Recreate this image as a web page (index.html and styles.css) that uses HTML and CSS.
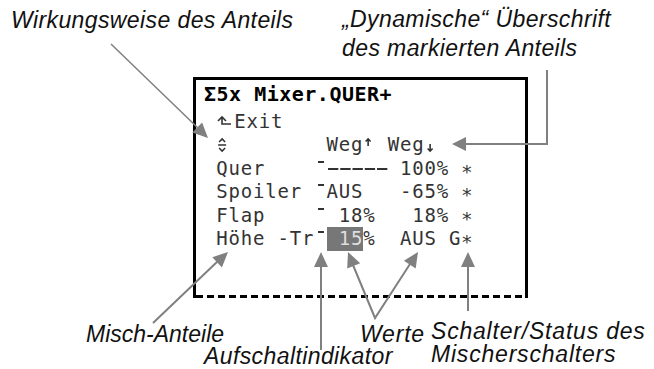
FILE: index.html
```html
<!DOCTYPE html>
<html lang="de">
<head>
    <meta charset="UTF-8">
    <title>Mixer QUER+</title>
    <link rel="stylesheet" href="styles.css">
</head>
<body>
    <div class="canvas">
        <p class="note note-mode">Wirkungsweise des Anteils</p>
        <p class="note note-head">„Dynamische“ Überschrift<br>des markierten Anteils</p>

        <div class="lcd">
            <div class="lcd-title">Σ5x Mixer.QUER+</div>
            <div class="row"> <svg class="ico ico-exit" viewBox="0 0 18 14"><path d="M2 7 L6 3 L10 7 M6 3 V10 H15" /></svg>Exit</div>
            <div class="row"> <svg class="ico ico-sel" viewBox="0 0 12 16"><path d="M3 5 L6 2 L9 5 M2 8 H10 M3 11 L6 14 L9 11" /></svg>        Weg<svg class="ico ico-dir" viewBox="0 0 12 16"><path d="M5 2 V9 M2.5 4.5 L5 2 L7.5 4.5" /></svg> Weg<svg class="ico ico-dir" viewBox="0 0 12 16"><path d="M5 7 V14 M2.5 11.5 L5 14 L7.5 11.5" /></svg></div>
            <div class="row"> Quer    <i class="ind"></i><span class="dashes"></span> 100% ∗</div>
            <div class="row"> Spoiler <i class="ind"></i>AUS   -65% ∗</div>
            <div class="row"> Flap    <i class="ind"></i> 18%   18% ∗</div>
            <div class="row"> Höhe -Tr<i class="ind"></i><span class="sel"> 15</span>%  AUS G∗</div>
        </div>

        <svg class="arrows" viewBox="0 0 654 369">
            <g class="arrow-lines">
                <line x1="111" y1="44" x2="199" y2="129" stroke-width="1.5"/>
                <polyline points="547,70 547,144 464,144"/>
                <line x1="153" y1="323" x2="218" y2="261"/>
                <line x1="321" y1="350" x2="321" y2="265"/>
                <polyline points="353,265 375,318 410,264"/>
                <line x1="468" y1="311" x2="468" y2="265"/>
            </g>
            <g class="arrow-heads">
                <polygon points="208,138 192.3,132.6 202.1,122.6"/>
                <polygon points="452,144 466,137 466,151"/>
                <polygon points="228,252 221.9,267.4 212.3,257.2"/>
                <polygon points="321,252 314,267 328,267"/>
                <polygon points="348,252 360.2,263.2 347.2,268.6"/>
                <polygon points="418,252 415.7,268.4 403.9,260.8"/>
                <polygon points="468,252 461,267 475,267"/>
            </g>
        </svg>

        <p class="note note-mix">Misch-Anteile</p>
        <p class="note note-values">Werte</p>
        <p class="note note-switch">Schalter/Status des<br>Mischerschalters</p>
        <p class="note note-ind">Aufschaltindikator</p>
    </div>
</body>
</html>
```

FILE: styles.css
```css
body {
    margin: 0;
    background: #fff;
}
.canvas {
    position: relative;
    width: 654px;
    height: 369px;
    overflow: hidden;
    padding: 77px 0 0 193px;
    box-sizing: border-box;
    font-family: "Liberation Sans", Arial, sans-serif;
}

/* annotations round the display */
.note {
    position: absolute;
    margin: 0;
    font-style: italic;
    font-size: 23px;
    line-height: 29px;
    letter-spacing: .4px;
    color: #111;
    white-space: nowrap;
}
.note-mode {
    left: 11px;
    top: 6px;
}
.note-head {
    left: 342px;
    top: 5px;
}
.note-mix {
    left: 86px;
    top: 320px;
    letter-spacing: 0;
}
.note-values {
    left: 360px;
    top: 320px;
    letter-spacing: .8px;
}
.note-switch {
    left: 431px;
    top: 320px;
    line-height: 23px;
    letter-spacing: .8px;
}
.note-ind {
    left: 204px;
    top: 346px;
    line-height: 20px;
}

/* the display */
.lcd {
    width: 335px;
    height: 221px;
    box-sizing: border-box;
    border: 3px solid #000;
    border-bottom: 0;
    padding-left: 8px;
    background: linear-gradient(to right, #000 7px, transparent 7px) left bottom / 11px 3px repeat-x;
    font-family: "DejaVu Sans Mono", monospace;
    font-size: 19px;
    letter-spacing: .81px;
    color: #333;
}
.lcd-title {
    font-weight: bold;
    font-size: 20px;
    letter-spacing: .5px;
    line-height: 29.5px;
    color: #000;
}
.row {
    white-space: pre;
    height: 23.5px;
    line-height: 23.5px;
}
.ico {
    display: inline-block;
    fill: none;
    stroke: #333;
    stroke-width: 1.6;
}
.ico-exit {
    width: 18px;
    height: 14px;
}
.ico-sel,
.ico-dir {
    width: 12.25px;
    height: 16px;
    vertical-align: -2px;
}
.ind {
    display: inline-block;
    width: 12.25px;
    height: 14px;
    background: linear-gradient(#333, #333) 4px 0 / 6px 2px no-repeat;
}
.dashes {
    display: inline-block;
    width: 61.25px;
    height: 2px;
    vertical-align: 5px;
    background: linear-gradient(to right, #333 10px, transparent 10px) 1px 0 / 12.25px 2px repeat-x;
}
.sel {
    display: inline-block;
    background: #777;
    color: #ddd;
}

/* pointer lines */
.arrows {
    position: absolute;
    left: 0;
    top: 0;
    width: 654px;
    height: 369px;
}
.arrow-lines {
    fill: none;
    stroke: #808080;
    stroke-width: 2;
}
.arrow-heads {
    fill: #808080;
}
```
